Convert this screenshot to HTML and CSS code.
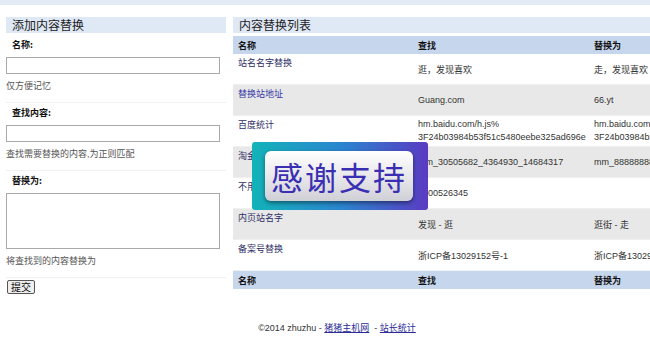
FILE: index.html
```html
<!DOCTYPE html>
<html>
<head>
    <meta charset="UTF-8">
    <title>内容替换</title>
    <link rel="stylesheet" href="styles.css">
</head>
<body>
    <div class="topbar"></div>
    <div class="main">
        <div class="side">
            <h2 class="panel-title">添加内容替换</h2>
            <form>
                <div class="field">
                    <label class="field-label" for="name">名称:</label>
                    <input type="text" id="name" class="text-input">
                    <p class="hint">仅方便记忆</p>
                </div>
                <div class="field">
                    <label class="field-label" for="find">查找内容:</label>
                    <input type="text" id="find" class="text-input">
                    <p class="hint">查找需要替换的内容,为正则匹配</p>
                </div>
                <div class="field">
                    <label class="field-label" for="replace">替换为:</label>
                    <textarea id="replace" class="text-area"></textarea>
                    <p class="hint">将查找到的内容替换为</p>
                </div>
                <button type="button" class="submit-btn">提交</button>
            </form>
        </div>
        <div class="content">
            <h2 class="panel-title">内容替换列表</h2>
            <table class="rules">
                <thead>
                    <tr><th class="col-name">名称</th><th class="col-find">查找</th><th>替换为</th></tr>
                </thead>
                <tbody>
                    <tr>
                        <td class="name"><a href="#">站名名字替换</a></td>
                        <td>逛，发现喜欢</td>
                        <td>走，发现喜欢</td>
                    </tr>
                    <tr class="alt">
                        <td class="name"><a href="#" class="fresh">替换站地址</a></td>
                        <td>Guang.com</td>
                        <td>66.yt</td>
                    </tr>
                    <tr>
                        <td class="name"><a href="#">百度统计</a></td>
                        <td class="wrap">hm.baidu.com/h.js%<br>3F24b03984b53f51c5480eebe325ad696e</td>
                        <td class="wrap">hm.baidu.com/h.js%<br>3F24b03984b53f51c5480eebe325ad696e</td>
                    </tr>
                    <tr class="alt">
                        <td class="name"><a href="#">淘金链接</a></td>
                        <td>mm_30505682_4364930_14684317</td>
                        <td>mm_88888888_8888888_88888888</td>
                    </tr>
                    <tr>
                        <td class="name"><a href="#">不用的统计</a></td>
                        <td>1000526345</td>
                        <td></td>
                    </tr>
                    <tr class="alt">
                        <td class="name"><a href="#">内页站名字</a></td>
                        <td>发现 - 逛</td>
                        <td>逛街 - 走</td>
                    </tr>
                    <tr>
                        <td class="name"><a href="#">备案号替换</a></td>
                        <td>浙ICP备13029152号-1</td>
                        <td>浙ICP备13029152号-1</td>
                    </tr>
                </tbody>
                <tfoot>
                    <tr><th>名称</th><th>查找</th><th>替换为</th></tr>
                </tfoot>
            </table>
        </div>
    </div>
    <div class="footer">
        ©2014 zhuzhu - <a href="#">猪猪主机网</a> &nbsp;- <a href="#">站长统计</a>
    </div>
    <div class="thanks">
        <div class="thanks-label">感谢支持</div>
    </div>
</body>
</html>
```

FILE: styles.css
```css
html, body {
  overflow: hidden;
}

body {
  margin: 0;
  position: relative;
  min-height: 354px;
  font-family: "Liberation Sans", Arial, "Noto Sans CJK SC", sans-serif;
  font-size: 9px;
  color: #333333;
  background-color: #ffffff;
}

.topbar {
  height: 5px;
  background-color: #e3ebf6;
}

.main {
  display: flex;
  gap: 7px;
  width: 840px;
  margin-left: 6px;
  padding-top: 12px;
}

.side {
  width: 220px;
  flex: none;
}

.content {
  width: 560px;
  flex: none;
}

.panel-title {
  margin: 0 0 2px;
  height: 16px;
  line-height: 16px;
  padding-left: 6px;
  font-family: "Noto Sans CJK SC", sans-serif;
  font-size: 12px;
  font-weight: normal;
  color: #222222;
  background-color: #dfe8f5;
}

form {
  margin: 0;
}

.field {
  padding: 3px 0 9px;
  border-bottom: 1px solid #f1f1f1;
}

.field-label {
  display: block;
  padding-left: 6px;
  line-height: 14px;
  font-family: "Noto Sans CJK SC", sans-serif;
  font-weight: bold;
  color: #111111;
  margin-bottom: 5px;
}

.text-input {
  display: block;
  box-sizing: border-box;
  width: 214px;
  height: 17px;
  margin: 0;
  border: 1px solid #a9a9a9;
  padding: 0 2px;
}

.text-area {
  display: block;
  box-sizing: border-box;
  width: 214px;
  height: 56px;
  margin: 0;
  border: 1px solid #a9a9a9;
  resize: none;
  overflow-y: scroll;
}

.hint {
  margin: 5px 0 0;
  line-height: 14px;
  color: #555555;
}

.submit-btn {
  margin: 2px 0 0 1px;
  height: 14px;
  padding: 0 3px;
  font-family: "Noto Sans CJK SC", sans-serif;
  font-size: 10px;
  line-height: 10px;
  color: #111111;
  background-color: #eeeeee;
  border: 1px solid #555555;
  border-radius: 2px;
}

.rules {
  width: 560px;
  border-collapse: collapse;
  table-layout: fixed;
}

.col-name {
  width: 170px;
}

.col-find {
  width: 166px;
}

.rules th {
  height: 18px;
  padding: 0 5px;
  text-align: left;
  font-family: "Noto Sans CJK SC", sans-serif;
  font-weight: bold;
  color: #111111;
  background-color: #c6d6ec;
  border-top: 1px solid #ffffff;
}

.rules td {
  height: 28px;
  padding: 0 5px;
  vertical-align: middle;
  border-bottom: 1px solid #f0f0f0;
  white-space: nowrap;
  overflow: hidden;
}

.rules td.wrap {
  line-height: 13px;
}

.rules td.name {
  vertical-align: top;
  padding-top: 2px;
  line-height: 14px;
}

.rules .alt td {
  background-color: #e8e8e8;
}

.name a {
  color: #2e2e66;
  text-decoration: none;
}

.name a.fresh {
  color: #3535a5;
}

.footer {
  width: 626px;
  padding: 27px 0 0 24px;
  text-align: center;
  color: #333333;
}

.footer a {
  color: #2c2c99;
  text-decoration: underline;
}

.thanks {
  position: absolute;
  left: 252px;
  top: 142px;
  width: 176px;
  height: 68px;
  padding: 9px 0 0 13px;
  box-sizing: border-box;
  border-radius: 3px;
  background-image: linear-gradient(90deg, #12b3b9 0%, #2a86cf 50%, #5a3bc2 100%);
}

.thanks-label {
  width: 148px;
  height: 50px;
  line-height: 50px;
  text-align: center;
  font-family: "Noto Sans CJK SC", sans-serif;
  font-size: 32px;
  letter-spacing: 2px;
  color: #3a2fb3;
  border-radius: 6px;
  background-image: linear-gradient(180deg, #ffffff 0%, #e4e4e8 60%, #cfcfd6 100%);
  box-shadow: 0 2px 4px rgba(0, 0, 0, 0.45);
}
```
